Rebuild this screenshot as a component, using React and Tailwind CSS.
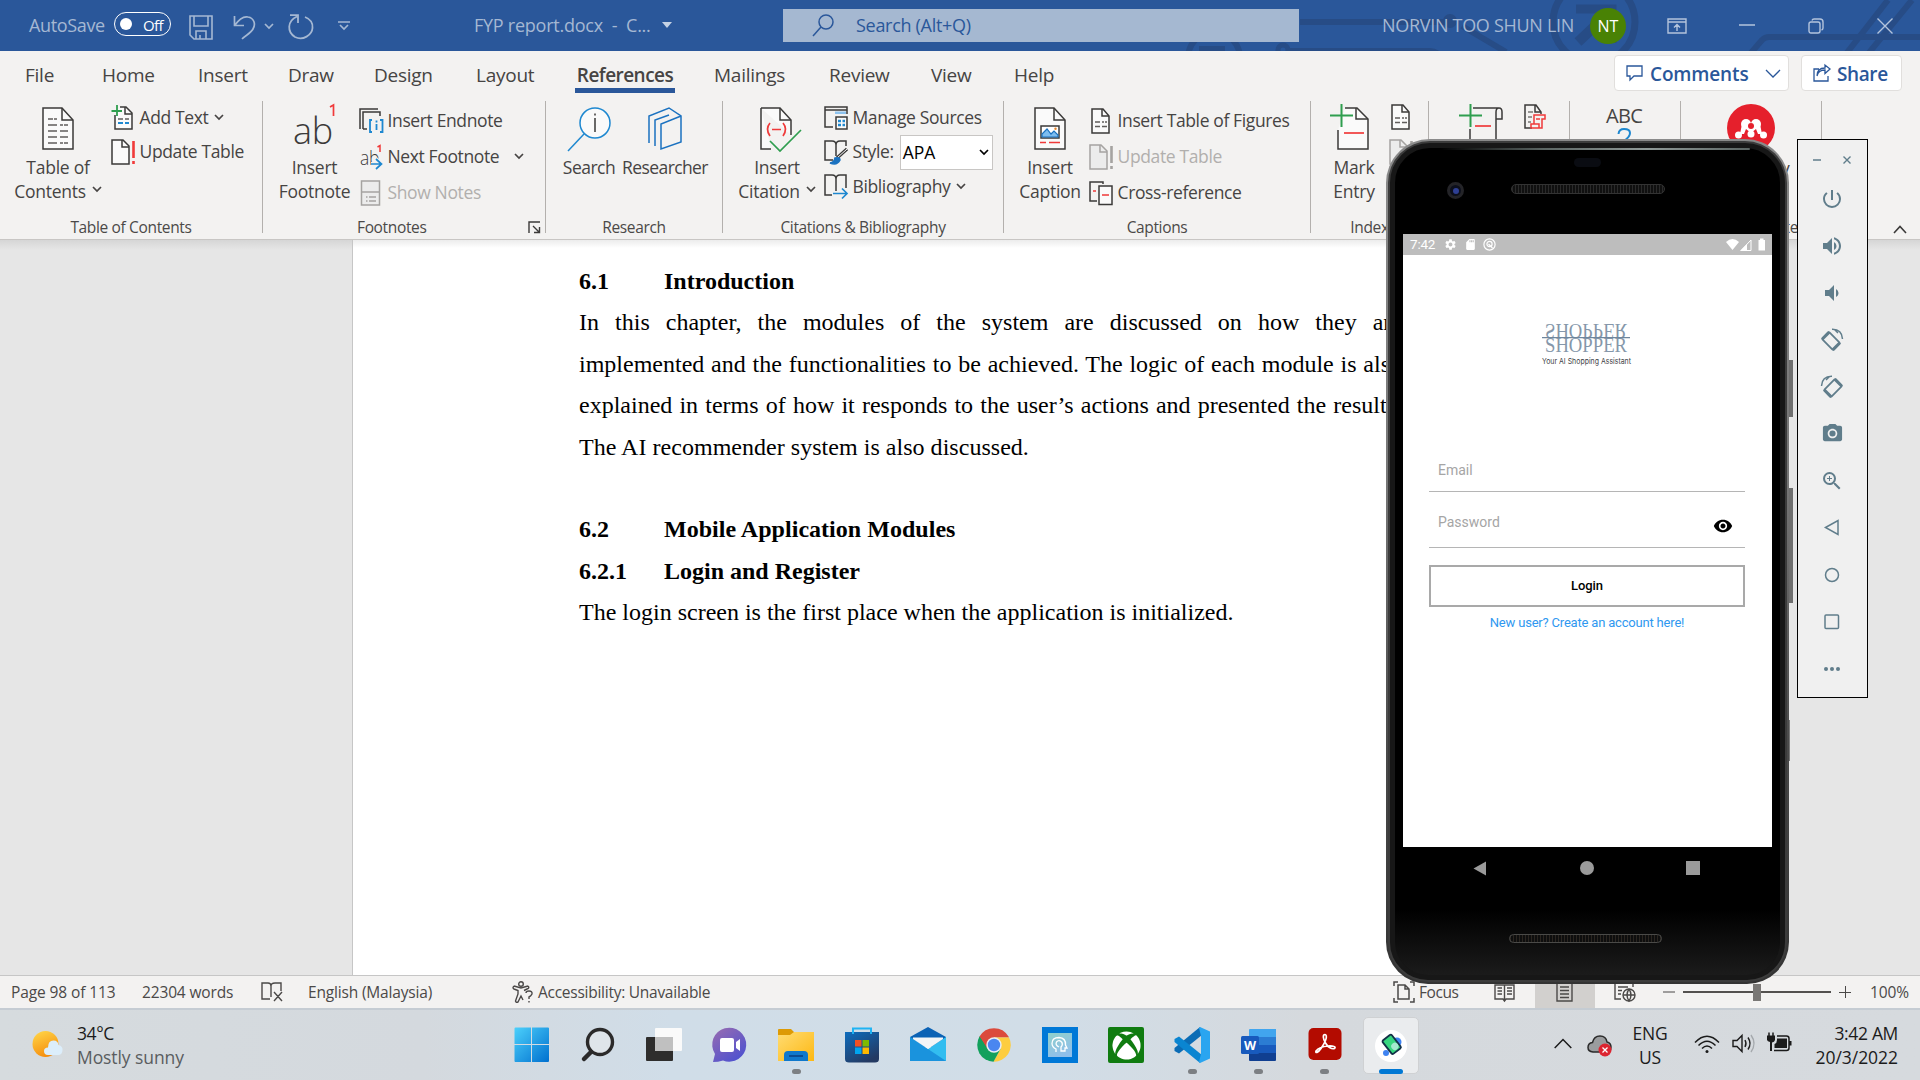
import React from "react";
import { MdPowerSettingsNew, MdVolumeUp, MdVolumeDown, MdPhotoCamera, MdZoomIn, MdSettings, MdRemoveRedEye, MdSdCard } from "react-icons/md";
import { FaXbox } from "react-icons/fa";

const INK = "#3b3a39";
const RED = "#f03a3a";
const BLUE = "#1e88d0";
const GREEN = "#2f9e4f";

function Svg({ w, h, className = "", children, ...rest }) {
  return (
    <svg width={w} height={h} viewBox={`0 0 ${w} ${h}`} fill="none" className={`shrink-0 overflow-visible ${className}`} {...rest}>
      {children}
    </svg>
  );
}

function Chevron({ w = 10, h = 6, className = "", sw = 1.7 }) {
  return (
    <Svg w={w} h={h} className={className} stroke="currentColor" strokeWidth={sw}>
      <path d={`M1 1 L${w / 2} ${h - 1} L${w - 1} 1`} />
    </Svg>
  );
}

/* ---------- Title bar ---------- */

function TitlePattern() {
  return (
    <svg className="absolute inset-y-0 right-0" width="740" height="51" viewBox="1180 0 740 51" fill="none" stroke="#274c86" strokeWidth="6">
      <path d="M1300 22 H1446" />
      <circle cx="1450" cy="21" r="7" fill="#274c86" stroke="none" />
      <path d="M1188 58 A26 26 0 0 1 1240 58" />
      <path d="M1199 46 h26 v8 h-26z" fill="#274c86" stroke="none" />
      <circle cx="1283" cy="50" r="5" strokeWidth="5" />
      <path d="M1290 51 H1430 q6 0 12 6" />
      <path d="M1462 26 L1506 52" />
      <circle cx="1594" cy="22" r="41" strokeWidth="7" />
      <path d="M1576 9 h36 v34" strokeWidth="9" />
      <path d="M1578 42 L1612 10" strokeWidth="10" />
      <path d="M1750 54 L1762 40 Q1765 37 1769 37 H1920" />
      <path d="M1846 54 L1888 0 M1868 54 L1912 0" />
    </svg>
  );
}

function TitleBar() {
  return (
    <header className="relative h-[51px] bg-[#2a579a] text-[#a5b8d3] overflow-hidden">
      <TitlePattern />
      <div className="relative flex h-full items-center text-[18px]">
        <span className="ml-[29px] w-[85px] tracking-[-0.35px]">AutoSave</span>
        <div className="-mt-[3px] flex h-6 w-[57px] items-center rounded-full border-[1.5px] border-white pl-[5px] text-white">
          <span className="h-3 w-3 rounded-full bg-white" />
          <span className="ml-[11px] mt-[2px] text-[15px] tracking-[-0.6px]">Off</span>
        </div>
        <Svg w={24} h={25} className="ml-[18px] mt-[3px]" stroke="currentColor" strokeWidth="1.6">
          <path d="M1 1 H23 V24 H5 L1 20 Z M5 1 V11 H19 V1 M7 24 V16 H17 V24 M11 24 V20" />
        </Svg>
        <Svg w={23} h={25} className="ml-5 mt-[3px]" stroke="currentColor" strokeWidth="1.7">
          <path d="M1.5 1 V10.5 H11 M1.5 10.5 C7 3 11 1 15 2 C21 3 23 9 20 14 C18 18 13 20 9 24" />
        </Svg>
        <Chevron w={10} h={6} className="ml-[8px]" />
        <Svg w={26} h={26} className="ml-[14px] mt-[3px]" stroke="currentColor" strokeWidth="1.8">
          <path d="M2 1.2 H10 V9 M9 2.5 C-1 7 -1 18 7 23 C15 27 24 21 24.500 14 C25 9 22 5 17 3" />
        </Svg>
        <Svg w={12} h={9} className="ml-6" stroke="currentColor" strokeWidth="1.7">
          <path d="M0 1 H12 M2 4 L6 8 L10 4" />
        </Svg>
        <span className="ml-[124px] w-[188px] whitespace-pre tracking-[-0.25px]">FYP report.docx  -  C...</span>
        <Svg w={10} h={6} fill="#c5d2e4" className="-mt-[2px]"><path d="M0 0 H10 L5 6 Z" fill="#c5d2e4" /></Svg>
        <div className="ml-[111px] flex h-[33px] w-[516px] items-center bg-[#a5b8d1] text-[#2a579a]">
          <Svg w={22} h={23} className="ml-[29px]" stroke="currentColor" strokeWidth="1.5">
            <circle cx="14" cy="8" r="7" /><path d="M9 13 L1 22" />
          </Svg>
          <span className="ml-[22px] tracking-[-0.3px]">Search (Alt+Q)</span>
        </div>
        <span className="ml-[83px] w-[208px] whitespace-nowrap tracking-[-0.3px]">NORVIN TOO SHUN LIN</span>
        <span className="flex h-9 w-9 items-center justify-center rounded-full bg-[#498205] text-[16px] text-white">NT</span>
        <Svg w={20} h={16} className="ml-[41px]" stroke="#b4c4dc" strokeWidth="1.4">
          <path d="M1 1 H19 V15 H1 Z M1 4 H19 M10 13 V7 M7 9.500 L10 6.500 L13 9.500" />
        </Svg>
        <Svg w={16} h={2} className="ml-[52px] -mt-[2px]" stroke="#b4c4dc" strokeWidth="1.5"><path d="M0 1 H16" /></Svg>
        <Svg w={16} h={16} className="ml-[53px]" stroke="#b4c4dc" strokeWidth="1.4">
          <rect x="1" y="4" width="11" height="11" rx="2" /><path d="M4 2.500 Q4.500 1 6 1 H12 Q15 1 15 4 V10 Q15 11.500 13.500 12" />
        </Svg>
        <Svg w={16} h={16} className="ml-[53px]" stroke="#b4c4dc" strokeWidth="1.4"><path d="M0.500 0.500 L15.500 15.500 M15.500 0.500 L0.500 15.500" /></Svg>
      </div>
    </header>
  );
}

/* ---------- Tabs ---------- */

const TABS = [
  ["File", "w-[77px]"], ["Home", "w-[96px]"], ["Insert", "w-[90px]"], ["Draw", "w-[86px]"], ["Design", "w-[102px]"],
  ["Layout", "w-[99px]"], ["References", "w-[139px]"], ["Mailings", "w-[115px]"], ["Review", "w-[102px]"], ["View", "w-[83px]"], ["Help", "w-[60px]"],
];

function Tabs() {
  return (
    <nav className="flex h-11 items-start pl-[25px] text-[19px] text-[#464443]">
      {TABS.map(([t, w]) => (
        <div key={t} className={`${w} flex h-[42px] shrink-0 items-end`}>
          {t === "References" ? (
            <span className="flex h-[37px] w-[100px] items-start justify-center whitespace-nowrap border-b-[5px] border-[#2a579a] font-semibold leading-[39px] tracking-[-0.55px]">{t}</span>
          ) : (
            <span className="h-[37px] leading-[39px] tracking-[-0.25px]">{t}</span>
          )}
        </div>
      ))}
      <div className="ml-[540px] mt-1 flex h-[36px] w-[175px] shrink-0 items-center rounded border border-[#e1dfdd] bg-white text-[#2a579a]">
        <Svg w={17} h={16} className="ml-[11px]" stroke="currentColor" strokeWidth="1.3"><path d="M1 1 H16 V11 H8 L4 15 V11 H1 Z" /></Svg>
        <span className="ml-[7px] mt-[3px] w-[115px] font-semibold tracking-[-0.15px]">Comments</span>
        <Chevron w={16} h={9} sw={1.3} />
      </div>
      <div className="ml-3 mt-1 flex h-[36px] w-[101px] shrink-0 items-center rounded border border-[#e1dfdd] bg-white text-[#2a579a]">
        <Svg w={18} h={18} className="ml-[11px]" stroke="currentColor" strokeWidth="1.3">
          <path d="M6 5 H1 V17 H15 V12 M4 12 C5 7 8 6 12 6 V9.500 L17 5 L12 1 V4 C7 4 4 7 4 12" />
        </Svg>
        <span className="ml-[6px] mt-[3px] font-semibold tracking-[-0.4px]">Share</span>
      </div>
    </nav>
  );
}

/* ---------- Ribbon icons ---------- */

const TocIcon = () => (
  <Svg w={32} h={43} stroke={INK} strokeWidth="1.5">
    <path d="M1 1 H20 L31 13 V42 H1 Z" fill="#fafafa" /><path d="M20 1 V13 H31" />
    <path d="M6 12 H11 M12 12 H15 M6 18 H15 M6 24 H15 M6 30 H15 M6 36 H15 M18 18 H21 M22 18 H26 M18 24 H26 M18 30 H26 M18 36 H21 M22 36 H26" stroke="#605e5c" strokeWidth="1.3" />
  </Svg>
);

const AddTextIcon = () => (
  <Svg w={25} h={26} stroke={INK} strokeWidth="1.5">
    <path d="M4 10 V24 H21 V8 L15 2 H9" fill="#fafafa" /><path d="M14 2 V9 H21" />
    <path d="M6 0 V11 M0.500 6 H11" stroke={GREEN} strokeWidth="1.8" />
    <path d="M7 14 H12 M14 14 H18 " stroke="#605e5c" /><path d="M7 18 H12 M14 18 H18" stroke={BLUE} strokeWidth="1.8" />
  </Svg>
);

const UpdateIcon = ({ off }) => (
  <Svg w={25} h={26} stroke={off ? "#a5a3a1" : INK} strokeWidth="1.5">
    <path d="M1 1 H12 L18 7 V25 H1 Z" fill={off ? "#ececec" : "#fafafa"} /><path d="M11 1 V8 H18" />
    <path d="M22.500 2 V19 M22.500 22 V25" stroke={off ? "#a5a3a1" : RED} strokeWidth="2.600" />
  </Svg>
);

const AbIcon = () => (
  <Svg w={43} h={42}>
    <text x="0" y="39.500" fontSize="37" fontFamily="Open Sans, sans-serif" fontWeight="300" fill={INK} textLength="40" lengthAdjust="spacingAndGlyphs">ab</text>
    <path d="M37 3 L40.500 1 V12" stroke={RED} strokeWidth="1.700" />
  </Svg>
);

const EndnoteIcon = () => (
  <Svg w={25} h={26} stroke={INK} strokeWidth="1.5">
    <path d="M1 21 V1 H19 M4 21 V4 H21 V8 M4 21 H8" />
    <path d="M13 12 H11 V24 H13 M21 12 H23.500 V24 H21 M17.500 12.500 V14.500 M17.500 16 V22" stroke={BLUE} strokeWidth="1.800" />
  </Svg>
);

const NextIcon = () => (
  <Svg w={25} h={26}>
    <text x="1" y="21" fontSize="20" fontFamily="Open Sans, sans-serif" fontWeight="300" fill={INK} textLength="19" lengthAdjust="spacingAndGlyphs">ab</text>
    <path d="M18.500 3 L21 1.500 V8" stroke={RED} strokeWidth="1.500" />
    <path d="M12 20 H22 M17 15 L22.500 20 L17 25" stroke="#f3f2f1" strokeWidth="4" />
    <path d="M12 20 H22 M17 15 L22.500 20 L17 25" stroke={BLUE} strokeWidth="1.700" />
  </Svg>
);

const NotesIcon = () => (
  <Svg w={25} h={26} stroke="#a5a3a1" strokeWidth="1.5">
    <path d="M2.500 1 H20.500 V25 H2.500 Z M2.500 12 H20.500" fill="#ececec" /><path d="M7 17 H8.500 M10 17 H17 M7 21 H8.500 M10 21 H17" />
  </Svg>
);

const SearchIcon = () => (
  <Svg w={44} h={45} stroke={BLUE} strokeWidth="1.500">
    <circle cx="28" cy="16" r="15" fill="#fafafa" /><path d="M17 27 L1 44" /><path d="M28 11 V25 M28 6.500 V8.500" stroke={INK} />
  </Svg>
);

const ResearcherIcon = () => (
  <Svg w={36} h={43} stroke="#1b72c0" strokeWidth="1.500">
    <path d="M2 36 V9 L22 1 L34 9 V35 L14 42 V17 L34 9 M8 39 V13 L22 8 M14 42" />
  </Svg>
);

const CitationIcon = () => (
  <Svg w={42} h={45} stroke={INK} strokeWidth="1.500">
    <path d="M1 1 H20 L31 13 V28 M11 42 H1 V1" fill="#fafafa" /><path d="M20 1 V13 H31" />
    <path d="M10 16 Q5 22 10 29 M23 16 Q28 22 23 29 M12 22.500 H21" stroke={RED} strokeWidth="1.700" />
    <path d="M10 34 L20 44 L41 23" stroke={GREEN} strokeWidth="1.700" />
  </Svg>
);

const ManageIcon = () => (
  <Svg w={25} h={24} stroke={INK} strokeWidth="1.500">
    <path d="M23 8 V1 H1 V21 H9 M1 4 H23" /><path d="M11 5.500 H22 V8 H11Z" fill="#8ec3ee" stroke="none" />
    <rect x="12" y="11" width="11" height="12" fill="#fafafa" />
    <path d="M14 15 H17 M18.500 15 H21 M14 19 H17 M18.500 19 H21" stroke={BLUE} strokeWidth="2.400" />
  </Svg>
);

const StyleIcon = () => (
  <Svg w={25} h={26} stroke={INK} strokeWidth="1.500">
    <path d="M9 21 H1 V2 H8 Q12 2 12 6 V17 M12 6 Q12 2 16 2 H22 V7" fill="none" />
    <path d="M23 10 L13 19" strokeWidth="3.200" /><path d="M23 10 L13 19" stroke="#fafafa" strokeWidth="1" />
    <path d="M6 24 Q10 24 11 19 Q16 18 16 21 Q13 27 6 24 Z" fill="#1b72c0" stroke="#1b72c0" />
  </Svg>
);

const BiblioIcon = () => (
  <Svg w={25} h={26} stroke={INK} strokeWidth="1.500">
    <path d="M8 21 H1 V1 H8 Q12 1 12 5 V17 M12 5 Q12 1 16 1 H22 V14" />
    <path d="M9 19.500 H23 M18 14.500 L23 19.500 L18 24.500" stroke={BLUE} strokeWidth="1.700" />
  </Svg>
);

const CaptionIcon = () => (
  <Svg w={32} h={43} stroke={INK} strokeWidth="1.500">
    <path d="M1 1 H20 L31 13 V42 H1 Z" fill="#fafafa" /><path d="M20 1 V13 H31" />
    <rect x="7" y="19" width="18" height="12" fill="#fff" />
    <path d="M8 30 V27 L13 22 L17 27 L20 24 L24 28 V30 Z" fill="#7dbdf0" stroke="#1b72c0" strokeWidth="1.200" />
    <circle cx="21.500" cy="21.800" r="1.200" fill="#e8842a" stroke="none" />
    <path d="M6 35.500 H12 M15 35.500 H26" stroke={RED} strokeWidth="1.700" />
  </Svg>
);

const LinesDoc = ({ w = 24 }) => (
  <Svg w={w} h={26} stroke={INK} strokeWidth="1.500">
    <path d="M3 1 H14 L20 8 V25 H3 Z" fill="#fafafa" /><path d="M13 1 V8 H20" />
    <path d="M6 14 H11 M13 14 H15 M16 14 H18 M6 18.500 H11 M13 18.500 H18" stroke="#605e5c" />
  </Svg>
);

const CrossIcon = () => (
  <Svg w={25} h={25} stroke={INK} strokeWidth="1.500">
    <path d="M14 3 V1 H1 V20 H8" /><rect x="10" y="5" width="13" height="18.500" fill="#fafafa" />
    <path d="M4 10 H7 M13 14 H20" stroke={RED} strokeWidth="1.700" />
  </Svg>
);

const MarkIcon = () => (
  <Svg w={40} h={46} stroke={INK} strokeWidth="1.500">
    <path d="M15 4 H27 L38 15 V45 H8 V26" fill="#fafafa" /><path d="M26 4 V15 H38" />
    <path d="M11.500 0 V23 M0 11.500 H23" stroke={GREEN} strokeWidth="2" /><path d="M14 29 H34" stroke={RED} strokeWidth="1.700" />
  </Svg>
);

const ScrollIcon = () => (
  <Svg w={46} h={46} stroke={INK} strokeWidth="1.500">
    <path d="M14 4 H40 Q43 4 43 8 V15 H37 V8 Q37 4 40 4 M37 15 V45 H11 V25" />
    <path d="M11.500 0 V23 M0 11.500 H23" stroke={GREEN} strokeWidth="2" /><path d="M16 22 H32" stroke={RED} strokeWidth="1.700" />
  </Svg>
);

const AuthoritiesIcon = () => (
  <Svg w={24} h={26} stroke={INK} strokeWidth="1.500">
    <path d="M8 24 H1 V1 H12 L17 8 V10 M11 1 V8 H17" /><path d="M4 8 H9 M4 13 H8 M4 18 H7" strokeWidth="1.200" />
    <path d="M10 11 H21 V15 H18 V24 H7 V20 H10 Z M10 20 H15 V24 M12 15 H16" stroke={RED} />
  </Svg>
);

/* ---------- Ribbon ---------- */

function Group({ w, label, children, launcher, labelClass = "justify-center" }) {
  return (
    <section className={`${w} flex h-[132px] shrink-0 flex-col border-r border-[#b3b0ad]`}>
      <div className="flex h-[115px] shrink-0 items-start">{children}</div>
      <div className={`relative flex h-[22px] shrink-0 items-center whitespace-nowrap text-[15.500px] leading-[22px] tracking-[-0.350px] text-[#4b4948] ${labelClass}`}>
        {label}
        {launcher && (
          <Svg w={13} h={13} className="absolute right-[4px] top-[5px]" stroke={INK} strokeWidth="1.400">
            <path d="M1 12 V1 H12 M5 5 L11 11 M11.500 6 V11.500 H6" />
          </Svg>
        )}
      </div>
    </section>
  );
}

function Big({ w, icon, l1, l2, drop }) {
  return (
    <div className={`${w} flex shrink-0 flex-col items-center text-[17.500px] leading-6 tracking-[-0.250px]`}>
      <div className="flex h-[54px] w-full items-end justify-center"><div className="flex h-[48px] items-start justify-center">{icon}</div></div>
      <span className="whitespace-nowrap">{l1}</span>
      {l2 && <span className="flex items-center gap-[6px] whitespace-nowrap">{l2}{drop && <Chevron className="-mt-1" />}</span>}
    </div>
  );
}

function Row({ icon, text, h = "h-9", off, drop = "" }) {
  return (
    <div className={`${h} flex items-center whitespace-nowrap text-[17.500px] tracking-[-0.370px] ${off ? "text-[#b1afad]" : ""}`}>
      <span className="flex w-[28.500px] items-center">{icon}</span>
      <span className="-mt-px">{text}</span>
      {drop && <Chevron className={`-mt-[2px] ${drop}`} />}
    </div>
  );
}

function Ribbon() {
  return (
    <div className="flex h-[145px] items-start border-b border-[#c8c6c4] pt-[6px] text-[#464443]">
      <Group w="w-[263px]" label="Table of Contents">
        <Big w="w-[112px] pl-1" icon={<TocIcon />} l1="Table of" l2="Contents" drop />
        <div className="-ml-[1px] flex flex-col">
          <Row h="h-[34px]" icon={<AddTextIcon />} text="Add Text" drop="ml-[6px]" />
          <Row h="h-[34px]" icon={<UpdateIcon />} text="Update Table" />
        </div>
      </Group>
      <Group w="w-[283px]" label="Footnotes" launcher labelClass="pl-[94px]">
        <Big w="w-[96px] pl-[7px]" icon={<div className="-mt-[3px]"><AbIcon /></div>} l1="Insert" l2="Footnote" />
        <div className="flex flex-col pt-[2px]">
          <Row icon={<EndnoteIcon />} text="Insert Endnote" />
          <Row icon={<NextIcon />} text="Next Footnote" drop="ml-[15px]" />
          <Row icon={<NotesIcon />} text="Show Notes" off />
        </div>
      </Group>
      <Group w="w-[177px]" label="Research">
        <Big w="w-[73px] pl-[13px]" icon={<SearchIcon />} l1={<span className="tracking-[-0.500px]">Search</span>} />
        <Big w="w-[92px]" icon={<ResearcherIcon />} l1={<span className="tracking-[-0.600px]">Researcher</span>} />
      </Group>
      <Group w="w-[281px]" label="Citations & Bibliography">
        <Big w="w-[101px] pl-[7px]" icon={<div className="ml-[8px]"><CitationIcon /></div>} l1="Insert" l2="Citation" drop />
        <div className="flex flex-col">
          <Row h="h-[34px]" icon={<ManageIcon />} text="Manage Sources" />
          <div className="flex h-[34px] items-center">
            <Row h="h-[34px]" icon={<StyleIcon />} text="Style:" />
            <div className="ml-[6px] flex h-[35px] w-[93px] items-center justify-between border border-[#c8c6c4] bg-white pl-[2px] pr-[3px] text-[17.500px] text-black">
              APA <Chevron />
            </div>
          </div>
          <Row h="h-[36px]" icon={<BiblioIcon />} text="Bibliography" drop="ml-[6px]" />
        </div>
      </Group>
      <Group w="w-[307px]" label="Captions">
        <Big w="w-[85px] pl-[7px]" icon={<CaptionIcon />} l1="Insert" l2="Caption" />
        <div className="flex flex-col pt-[2px]">
          <Row icon={<LinesDoc />} text="Insert Table of Figures" />
          <Row icon={<UpdateIcon off />} text="Update Table" off />
          <Row icon={<CrossIcon />} text="Cross-reference" />
        </div>
      </Group>
      <Group w="w-[118px]" label="Index">
        <Big w="w-[78px] pl-[8px]" icon={<div className="-mt-[3px] -ml-[8px]"><MarkIcon /></div>} l1="Mark" l2="Entry" />
        <div className="flex flex-col gap-[9px] pt-[3px]">
          <LinesDoc />
          <UpdateIcon off />
        </div>
      </Group>
      <Group w="w-[141px]" label="">
        <div className="flex gap-[19px] pl-[30px] pt-[3px]"><ScrollIcon /><AuthoritiesIcon /></div>
      </Group>
      <Group w="w-[111px]" label="">
        <div className="flex flex-col items-center pl-[36px] pt-[3px]">
          <span className="text-[20px] leading-6 tracking-[-0.600px]">ABC</span>
          <Svg w={14} h={24} stroke={BLUE} strokeWidth="2"><path d="M1.500 6 Q2 1 7 1 Q13 1 13 5 Q13 9 7 13 V18" /></Svg>
        </div>
      </Group>
      <Group w="w-[141px]" label="Mendeley Cite" labelClass="justify-end pr-[23px]">
        <div className="flex w-full flex-col items-center pt-[3px]">
          <Svg w={48} h={48}>
            <circle cx="24" cy="24" r="24" fill="#e5202c" />
            <g fill="#fff"><circle cx="19" cy="20" r="5" /><circle cx="29" cy="20" r="5" /><path d="M15 20 L13 30 H17 L19 25 L24 29 L29 25 L31 30 H35 L33 20 Z" /><circle cx="11.500" cy="31" r="3.500" /><circle cx="24" cy="30" r="3.500" /><circle cx="36.500" cy="31" r="3.500" /></g>
            <circle cx="24" cy="22" r="3" fill="#e5202c" />
          </Svg>
          <span className="mt-1 text-[17.500px] leading-6 tracking-[-0.400px]">Mendeley</span>
        </div>
      </Group>
      <Svg w={14} h={9} className="ml-[71px] mt-[124px]" stroke={INK} strokeWidth="1.600"><path d="M1 8 L7 1.500 L13 8" /></Svg>
    </div>
  );
}

/* ---------- Document ---------- */

function Document() {
  return (
    <main className="flex h-[735px] bg-[linear-gradient(to_bottom,#d6d6d6,#e6e6e6_10px)]">
      <article className="ml-[352px] w-[1192px] border-l border-[#c6c6c6] bg-[linear-gradient(to_bottom,#ececec,#ffffff_8px)] pl-[226px] pt-[21px] font-['Liberation_Serif',serif] text-[24px] leading-[41.400px] text-black">
        <h2 className="flex font-bold"><span className="w-[85px]">6.1</span>Introduction</h2>
        <p className="w-[823px] text-justify [text-align-last:justify]">In this chapter, the modules of the system are discussed on how they are</p>
        <p className="w-[823px] text-justify [text-align-last:justify]">implemented and the functionalities to be achieved. The logic of each module is also</p>
        <p className="w-[823px] text-justify [text-align-last:justify]">explained in terms of how it responds to the user’s actions and presented the results.</p>
        <p className="tracking-[0.03px]">The AI recommender system is also discussed.</p>
        <h2 className="mt-[41.400px] flex font-bold tracking-[0.03px]"><span className="w-[85px]">6.2</span>Mobile Application Modules</h2>
        <h3 className="flex font-bold"><span className="w-[85px]">6.2.1</span>Login and Register</h3>
        <p>The login screen is the first place when the application is initialized.</p>
      </article>
    </main>
  );
}

/* ---------- Status bar ---------- */

function StatusBar() {
  const c = "#4b4948";
  return (
    <footer className="flex h-[33px] items-center border-t border-[#c6c6c6] bg-[#f3f2f1] text-[15.500px] text-[#4b4948]">
      <span className="ml-[11px] mt-[2px] w-[131px] tracking-[-0.100px]">Page 98 of 113</span>
      <span className="mt-[2px] w-[119px] tracking-[-0.150px]">22304 words</span>
      <Svg w={22} h={20} stroke={c} strokeWidth="1.400"><path d="M9 17 H1 V1 H7 Q10 1 10 4 V15 M10 4 Q10 1 14 1 H20 V9 M13 10 L21 19 M21 10 L13 19" /></Svg>
      <span className="ml-[25px] mt-[2px] w-[204px] tracking-[-0.170px]">English (Malaysia)</span>
      <Svg w={22} h={22} stroke={c} strokeWidth="1.400">
        <circle cx="9" cy="3" r="2.300" /><path d="M2 5 Q0 7 2 8 L6 9.500 V13 L3.500 20 Q4 22 6 21 L9 15 L11 19 M16 5 Q18 7 15 8 L12 9.500 M2 5 L9 7 L16 5" />
        <path d="M14 12 Q14 10 17 10 Q20.500 10 20 13 Q19 15 17 16 V18 M17 20 V21.500" />
      </Svg>
      <span className="ml-[4px] mt-[2px] w-[855px] tracking-[-0.260px]">Accessibility: Unavailable</span>
      <Svg w={22} h={22} stroke={c} strokeWidth="1.500"><path d="M5 1 H1 V5 M17 1 H21 V5 M1 17 V21 H5 M21 17 V21 H17 M5 4 H12 L16 8 V18 H5 Z M12 4 V8 H16" /></Svg>
      <span className="ml-[4px] mt-[2px] w-[75px] tracking-[-0.450px]">Focus</span>
      <Svg w={22} h={20} stroke={c} strokeWidth="1.400"><path d="M10.500 3 V19 M10.500 3 H1 V17 H9 L10.500 19 L12 17 H20 V3 Z M3.500 6 H8 M3.500 9 H8 M3.500 12 H8 M13 6 H18 M13 9 H18 M13 12 H18" /></Svg>
      <div className="ml-[19px] flex h-full w-[60px] items-center justify-center bg-[#d2d0ce] pr-[2px]">
        <Svg w={17} h={20} stroke={c} strokeWidth="1.400"><path d="M1 1 H16 V19 H1 Z M4 5 H13 M4 8.500 H13 M4 12 H13 M4 15.500 H13" /></Svg>
      </div>
      <Svg w={22} h={20} className="ml-[19px]" stroke={c} strokeWidth="1.400"><path d="M7 17 H1 V1 H19 V5 M4 5 H14 M4 8.500 H8 M4 12 H7" /><circle cx="15" cy="13" r="6" /><path d="M9 13 H21 M15 7 Q11 13 15 19 Q19 13 15 7" /></Svg>
      <Svg w={12} h={2} className="ml-[27px]" stroke={c}><path d="M0 1 H12" /></Svg>
      <div className="ml-[8px] flex w-[148px] items-center">
        <span className="h-[2px] w-[70px] bg-[#53514f]" /><span className="h-[17px] w-2 bg-[#797775]" /><span className="h-[2px] w-[70px] bg-[#53514f]" />
      </div>
      <Svg w={12} h={12} className="ml-[8px]" stroke={c}><path d="M0 6.500 H12 M6.500 0 V12" /></Svg>
      <span className="ml-[19px] mt-[2px] tracking-[-0.150px]">100%</span>
    </footer>
  );
}

/* ---------- Taskbar ---------- */

const WinLogo = () => (
  <Svg w={36} h={36}>
    <defs><linearGradient id="win" x1="0" y1="0" x2="1" y2="1"><stop stopColor="#4cd0fb" /><stop offset="1" stopColor="#0070cf" /></linearGradient></defs>
    <path d="M0.500 1.500 Q0.500 0.500 1.500 0.500 H17 V17 H0.500Z M18 0.500 H34 Q35 0.500 35 1.500 V17 H18Z M0.500 18 H17 V35 H1.500 Q0.500 35 0.500 34Z M18 18 H35 V34 Q35 35 34 35 H18Z" fill="url(#win)" />
  </Svg>
);
const FindIcon = () => (
  <Svg w={36} h={36} stroke="#2b2a2a" strokeLinecap="round"><circle cx="20" cy="15" r="12.500" strokeWidth="3.400" fill="#dfe5ea" /><path d="M11 25 L4 32" strokeWidth="4.500" /></Svg>
);
const TaskView = () => (
  <Svg w={36} h={36}><rect x="0" y="10" width="27" height="24" rx="1" fill="#2e2d2c" /><rect x="9" y="1" width="27" height="23" rx="1" fill="#fafafa" /><path d="M9 10 H27 V24 H9Z" fill="#c0c0c0" /></Svg>
);
const ChatIcon = () => (
  <Svg w={36} h={36}>
    <defs><linearGradient id="chat" x1="0" y1="0" x2="0.700" y2="1"><stop stopColor="#9a6cb0" /><stop offset="1" stopColor="#4f52cf" /></linearGradient></defs>
    <path d="M1 35 L3 27 A17 17 0 1 1 11 33.500 Q6 35 1 35Z" fill="url(#chat)" />
    <rect x="8" y="11" width="14" height="14" rx="2" fill="#fff" /><path d="M24 15 L28 12 V24 L24 21Z" fill="#fff" />
  </Svg>
);
const FolderIcon = () => (
  <Svg w={36} h={36}>
    <defs><linearGradient id="fold" x1="0" y1="0" x2="1" y2="1"><stop stopColor="#ffdc73" /><stop offset="1" stopColor="#fdb813" /></linearGradient></defs>
    <path d="M0 3 Q0 2 1 2 H13 L16 5 H36 V12 H0Z" fill="#dd9a05" /><path d="M0 8 H12 L16 5 H36 V34 H0Z" fill="url(#fold)" />
    <path d="M6 34 V28 Q6 24 10 24 H26 Q30 24 30 28 V34Z" fill="#0f78cc" /><path d="M11 29 H25" stroke="#0a4c93" strokeWidth="2" />
  </Svg>
);
const StoreIcon = () => (
  <Svg w={36} h={36}>
    <defs><linearGradient id="store" x1="0" y1="0" x2="0.600" y2="1"><stop stopColor="#0d6cbd" /><stop offset="1" stopColor="#243a63" /></linearGradient></defs>
    <path d="M1 5 H35 V32 Q35 35.500 31 35.500 H5 Q1 35.500 1 32Z" fill="url(#store)" /><path d="M9 7 V1.500 H27 V7" stroke="#1fb3f3" strokeWidth="2" />
    <path d="M11 13 H17.500 V19.500 H11Z" fill="#f25022" /><path d="M18.500 13 H25 V19.500 H18.500Z" fill="#7fba00" /><path d="M11 20.500 H17.500 V27 H11Z" fill="#00a4ef" /><path d="M18.500 20.500 H25 V27 H18.500Z" fill="#ffb900" />
  </Svg>
);
const MailIcon = () => (
  <Svg w={36} h={36}><path d="M0 10 L18 0 L36 10 V20 H0Z" fill="#0b62b5" /><path d="M0 10 V34 H36 V10 L18 22Z" fill="#32bdf0" /><path d="M0 10 L36 34 H0Z" fill="#1a93dd" /><path d="M3 10.500 H33 V12 L18 22 L3 12Z" fill="#f3f5f7" /></Svg>
);
const ChromeIcon = () => (
  <Svg w={36} h={36}>
    <path d="M18 18 L3.500 9.600 A16.700 16.700 0 0 1 32.500 9.600 L33 10.500 H18Z" fill="#db4a3c" />
    <path d="M18 18 L18 10.500 H33 A16.700 16.700 0 0 1 17.500 34.700 L24.500 22Z" fill="#fdcd40" />
    <path d="M3.500 9.600 A16.700 16.700 0 0 0 17.500 34.700 L24.500 22 L18 18Z" fill="#12a05c" />
    <path d="M3.500 9.600 L11.500 22 L18 10.500 V8Z" fill="#db4a3c" />
    <path d="M3.500 9.600 L11.500 22 L18 26 L8 30 L2 20Z" fill="#12a05c" />
    <circle cx="18" cy="18" r="7.700" fill="#e9edf5" /><circle cx="18" cy="18" r="6.200" fill="#4a86f0" />
  </Svg>
);
const HeadIcon = () => (
  <Svg w={36} h={36}>
    <defs><linearGradient id="head" x1="0" y1="0" x2="0.400" y2="1"><stop stopColor="#8fd0cb" /><stop offset="1" stopColor="#8fbfea" /></linearGradient></defs>
    <rect width="36" height="36" fill="#0078d7" /><rect x="6" y="6" width="24" height="24" fill="url(#head)" />
    <path d="M14 25 V22 Q10 20 10 16.500 Q10 10.500 17 10.500 Q24 11 23.500 18 L25 21 H23 V24 H19 V20 Q21 18 20 15.500 Q17 12 14.500 15 Q13 18 17 20" stroke="#fff" strokeWidth="1.300" />
  </Svg>
);
const XboxIcon = () => (
  <span className="flex h-9 w-9 items-center justify-center rounded-[2px] bg-[#107c10]"><FaXbox className="h-[29px] w-[29px] text-white" /></span>
);
const CodeIcon = () => (
  <Svg w={36} h={36}>
    <path d="M26 0 L28 8 L5 26.500 L0.500 24 V21Z" fill="#0b6cb5" /><path d="M26 36 L28 28 L5 9.500 L0.500 12 V15Z" fill="#0a85d1" />
    <path d="M26 0 L36 4.500 V31.500 L26 36 L25 35 L27 27 V9 L25 1Z" fill="#2aa5f0" />
  </Svg>
);
const WordIcon = () => (
  <Svg w={36} h={36}>
    <path d="M8 3 Q8 2 9 2 H35 V10 H8Z" fill="#41a5ee" /><path d="M8 10 H35 V18 H8Z" fill="#2b7cd3" /><path d="M8 18 H35 V26 H8Z" fill="#185abd" /><path d="M8 26 H35 V33 Q35 34 34 34 H9 Q8 34 8 33Z" fill="#103f91" />
    <rect x="0" y="9" width="18" height="18" rx="1.500" fill="#185abd" />
    <text x="9" y="22.500" textAnchor="middle" fontFamily="Open Sans, sans-serif" fontWeight="700" fontSize="12.500" fill="#fff">W</text>
  </Svg>
);
const AcrobatIcon = () => (
  <Svg w={36} h={36}>
    <rect x="1.500" y="1" width="33" height="32" rx="5" fill="#b30b00" />
    <path d="M18 7.500 C15.500 7.500 16 12 18.500 16 C21 20.500 25 22.500 27.500 21.500 C29.500 20 26 18.500 21 19 C16 19.500 11 21.500 9 24 C8 26.500 11 26 14 21.500 C17 17 20 12 19.300 9 C19 8 18.700 7.500 18 7.500Z" stroke="#fff" strokeWidth="1.700" />
  </Svg>
);
const EmulatorIcon = () => (
  <Svg w={36} h={36}>
    <circle cx="18" cy="18" r="16" fill="#fff" /><circle cx="24" cy="14" r="4.500" fill="#3f83f1" /><circle cx="13" cy="25" r="3" fill="#3f83f1" />
    <g transform="rotate(-38 18.500 16.500)"><rect x="13" y="8" width="11.500" height="17" rx="1.500" fill="#37d67f" stroke="#123047" strokeWidth="1.800" /><circle cx="20" cy="20" r="3.600" fill="#a4e9cf" /></g>
  </Svg>
);

const APPS = [
  [WinLogo], [FindIcon], [TaskView], [ChatIcon], [FolderIcon, "dot"], [StoreIcon], [MailIcon], [ChromeIcon], [HeadIcon], [XboxIcon], [CodeIcon, "dot"], [WordIcon, "dot"], [AcrobatIcon, "dot"], [EmulatorIcon, "active"],
];

function Taskbar() {
  return (
    <div className="flex h-[72px] items-start border-t-2 border-[#c5ccd3] bg-[linear-gradient(to_right,#d6dbde_0%,#d4d9de_22%,#d0dde8_35%,#d1dde7_55%,#d5d9dd_68%,#d6dade_100%)] text-[#1b1b1b]">
      <div className="flex w-[499px] pl-[31px] pt-[11px]">
        <Svg w={34} h={36} className="mt-[9px]">
          <defs><linearGradient id="sun" x1="0.200" y1="0" x2="0.600" y2="1"><stop stopColor="#ffd447" /><stop offset="1" stopColor="#f58b0b" /></linearGradient></defs>
          <circle cx="14.500" cy="14" r="13" fill="url(#sun)" />
          <path d="M17 25 Q13 25 13 21 Q13 17.500 17 17.500 Q17 10.500 22.500 10.500 Q27 10.500 27.500 15 Q32 16 31.500 20.500 Q31 25 27 25Z" fill="#dceefb" />
        </Svg>
        <div className="ml-3 flex flex-col whitespace-nowrap text-[17.500px] leading-6 tracking-[-0.400px]">
          <span>34°C</span><span className="tracking-[-0.080px] text-[#5a5d60]">Mostly sunny</span>
        </div>
      </div>
      <div className="flex">
        {APPS.map(([I, s], i) => (
          <div key={i} className="flex w-[66.050px] shrink-0 flex-col items-center pt-[7px]">
            <div className={`flex h-[57px] w-[56px] flex-col items-center pt-[10px] ${s === "active" ? "rounded-[5px] border border-[#cfd1d3] bg-[#eaecee] pt-[9px]" : ""}`}>
              <I />
              {s === "dot" && <span className="mt-[6px] h-[5px] w-[9px] rounded-full bg-[#7c7f83]" />}
              {s === "active" && <span className="mt-[5px] h-[5px] w-6 shrink-0 rounded-full bg-[#0078d4]" />}
            </div>
          </div>
        ))}
      </div>
      <div className="flex flex-1 items-start justify-end pr-[22px] pt-[11px]">
        <Svg w={18} h={11} className="mt-[17px]" stroke="#1b1b1b" strokeWidth="1.500"><path d="M0.700 10 L9 1.500 L17.300 10" /></Svg>
        <Svg w={26} h={24} className="ml-[15px] mt-[13px]">
          <path d="M6 18 Q1 17.500 1 13.500 Q1 9 5.500 8.500 Q7 2 13 2 Q19 2 20 8 Q24 9 24 13 Q24 18 19 18Z" fill="#9a9c9e" stroke="#2a2a2a" strokeWidth="1.500" />
          <circle cx="18" cy="16" r="6.500" fill="#dc2430" /><path d="M15.500 13.500 L20.500 18.500 M20.500 13.500 L15.500 18.500" stroke="#fff" strokeWidth="1.300" />
        </Svg>
        <div className="ml-[19px] flex w-9 flex-col items-center text-[17.500px] leading-6 tracking-[-0.200px]"><span>ENG</span><span>US</span></div>
        <Svg w={26} h={20} className="ml-[26px] mt-[14px]" stroke="#1b1b1b" strokeWidth="1.500">
          <path d="M1 7.500 Q13 -5 25 7.500 M4.500 10.500 Q13 2 21.500 10.500 M8 13.500 Q13 8.500 18 13.500" /><circle cx="13" cy="16.500" r="1.500" fill="#1b1b1b" stroke="none" />
        </Svg>
        <Svg w={24} h={22} className="ml-[12px] mt-[12px]" stroke="#1b1b1b" strokeWidth="1.400">
          <path d="M1 7.500 H5 L10 2.500 V18.500 L5 13.500 H1Z M13 7 Q15 10.500 13 14 M16 4.500 Q20 10.500 16 16.500" /><path d="M19 2 Q25 10.500 19 19" stroke="#a5a9ad" />
        </Svg>
        <Svg w={25} h={22} className="ml-[11px] mt-[11px]">
          <path d="M2 0.500 V4 M6 0.500 V4" stroke="#1b1b1b" strokeWidth="1.500" /><path d="M0 3.500 H8 V8 Q7.500 10 5 10.500 V19 H3 V10 Q0.500 9.500 0 8Z" fill="#1b1b1b" />
          <path d="M10 4 H19.500 Q22 4 22 6.500 V16 Q22 18.500 19.500 18.500 H7" stroke="#1b1b1b" strokeWidth="1.500" /><path d="M22 9 H24.500 V13.500 H22Z" fill="#1b1b1b" /><path d="M10 6.500 H20 V16 H7.500 V12 Q10 11 10 8Z" fill="#1b1b1b" />
        </Svg>
        <div className="ml-[22px] flex w-[84px] flex-col items-end whitespace-nowrap text-[17.500px] leading-6"><span className="tracking-[-0.350px]">3:42 AM</span><span className="tracking-[-0.050px]">20/3/2022</span></div>
      </div>
    </div>
  );
}

/* ---------- Emulator ---------- */

function RotateIcon({ flip }) {
  return (
    <Svg w={24} h={24} stroke="currentColor" className={flip ? "-scale-x-100" : ""}>
      <g transform="rotate(-45 11 13)"><rect x="6" y="5" width="10" height="16" rx="1.200" strokeWidth="1.800" /><path d="M6 5.500 H16 M6 20.500 H16" strokeWidth="3" /></g>
      <path d="M12 1.200 Q22 1 22.500 11 M14.500 1.500 L18 5" strokeWidth="1.500" />
    </Svg>
  );
}

function ShopperLogo() {
  return (
    <svg width="96" height="46" viewBox="0 0 96 46" className="overflow-visible">
      <defs>
        <linearGradient id="fade" x1="0" y1="0" x2="0" y2="1"><stop offset="0.300" stopColor="#a3b2c1" /><stop offset="1" stopColor="#6a8199" /></linearGradient>
      </defs>
      <g fontFamily="Liberation Serif, serif" fontSize="21" fill="#8597aa">
        <text x="6" y="30" textLength="82" lengthAdjust="spacingAndGlyphs">SHOPPER</text>
        <text x="6" y="0" textLength="82" lengthAdjust="spacingAndGlyphs" transform="translate(0 1.500) scale(1 -1)" aria-hidden="true">SHOPPER</text>
      </g>
      <path d="M3 15.700 H91" stroke="#6f869d" strokeWidth="1.200" />
      <text x="3" y="42" fontFamily="Inter, sans-serif" fontSize="8" fontWeight="400" fill="#3f4347" textLength="89" lengthAdjust="spacingAndGlyphs">Your AI Shopping Assistant</text>
    </svg>
  );
}

function Phone() {
  return (
    <div className="absolute left-[1386px] top-[139px] h-[845px] w-[403px]">
      <div className="absolute right-[-4px] top-[221px] h-[57px] w-[5px] bg-[#6e6e6e]" />
      <div className="absolute right-[-4px] top-[349px] h-[115px] w-[5px] bg-[#6e6e6e]" />
      <div className="absolute right-[-1px] top-[581px] h-[41px] w-1 bg-[#777]" />
      <div className="relative flex h-full w-full flex-col rounded-[44px_44px_42px_42px] bg-[linear-gradient(to_bottom,#8a8a8a_0%,#777_40%,#4a4a4a_72%,#333_100%)] p-[2px]">
        <div className="flex flex-1 flex-col rounded-[42px_42px_40px_40px] bg-[#3c3c3c] p-[2px]">
          <div className="flex flex-1 flex-col items-center rounded-[40px_40px_38px_38px] border-[5px] border-[#171717] bg-[linear-gradient(to_bottom,#000_92%,#1b1b1b_100%)]">
            <div className="relative flex h-[86px] w-full flex-col items-center">
              <div className="absolute left-[45px] top-0 h-[2px] w-[310px] rounded-full bg-[linear-gradient(to_right,transparent,#5c6664,#909a98,#5c6664)]" />
              <div className="mt-[10px] h-[9px] w-[27px] rounded-full bg-[#0a0c12]" />
              <div className="mt-[17px] h-[10px] w-[154px] rounded-full border border-[#333] bg-[repeating-linear-gradient(to_right,#2a2a2a_0_1px,#101010_1px_3px)]" />
              <div className="absolute left-[52px] top-[34px] flex h-[17px] w-[17px] items-center justify-center rounded-full border-[3px] border-[#242428] bg-[#0c0f1c]"><span className="h-[6px] w-[6px] rounded-full bg-[#2e3f94]" /></div>
            </div>
            <div className="flex h-[613px] w-[369px] shrink-0 flex-col items-center bg-white pr-[1px] font-['Roboto',sans-serif]">
              <div className="-mr-[1px] flex h-[21px] w-[369px] items-center bg-[#bdbdbd] text-white">
                <span className="ml-[7px] w-[34px] text-[13.500px] tracking-[-0.200px]">7:42</span>
                <MdSettings size={13} />
                <MdSdCard size={13} className="ml-[7px]" />
                <Svg w={13} h={13} className="ml-[6px]" stroke="#fff" strokeWidth="1.200"><circle cx="6.500" cy="6.500" r="5.600" /><circle cx="6.500" cy="6" r="2.600" /><path d="M5.500 6 L9.500 10" /></Svg>
                <Svg w={13} h={11} className="ml-auto"><path d="M0 3 Q6.500 -3 13 3 L6.500 11Z" fill="#fff" /></Svg>
                <Svg w={12} h={12} className="ml-[1px]"><path d="M1 11.500 L11 1 V11.500Z" stroke="#fff" strokeWidth="1" /><path d="M0 12 L7 5 V12Z" fill="#fff" /></Svg>
                <Svg w={8} h={13} className="ml-[6px] mr-[6px]"><path d="M0.500 2 H2 V0.500 H5.500 V2 H7 V12.500 H0.500Z" fill="#fff" /></Svg>
              </div>
              <div className="mt-[67px] h-[46px]"><ShopperLogo /></div>
              <div className="mt-[90px] flex h-[34px] w-[316px] items-start border-b border-[#b5b5b5] pl-[9px] text-[14px] leading-[24px] text-[#a5a5a5]">Email</div>
              <div className="flex h-[56px] w-[316px] items-start justify-between border-b border-[#b5b5b5] pl-[9px] pt-[18px] text-[14px] leading-[25px] text-[#a5a5a5]">
                Password
                <MdRemoveRedEye size={20} className="mr-[12px] mt-[6px] text-black" />
              </div>
              <div className="mt-[17px] flex h-[42px] w-[316px] items-center justify-center border-2 border-[#a9a9a9] text-[13px] font-medium tracking-[-0.100px] text-black">Login</div>
              <div className="mt-[5px] text-[13px] leading-[22px] tracking-[-0.190px] text-[#2f98f0]">New user? Create an account here!</div>
            </div>
            <div className="flex h-[42px] w-full items-center justify-center pr-[3px]">
              <Svg w={14} h={15}><path d="M0.500 7.500 L13 0.500 V14.500Z" fill="#9a9a9a" /></Svg>
              <span className="ml-[93px] h-[14px] w-[14px] rounded-full bg-[#9a9a9a]" />
              <span className="ml-[92px] h-[14px] w-[14px] bg-[#9a9a9a]" />
            </div>
            <div className="mt-[45px] -ml-[4px] h-[9px] w-[153px] rounded-full border border-[#4a4a48] bg-[repeating-linear-gradient(to_right,#2a2520_0_1px,#0e0e0e_1px_3px)]" />
          </div>
        </div>
      </div>
    </div>
  );
}

function EmulatorToolbar() {
  const items = [
    <MdPowerSettingsNew size={24} />, <MdVolumeUp size={24} />, <MdVolumeDown size={24} />, <RotateIcon />, <RotateIcon flip />,
    <MdPhotoCamera size={23} />, <MdZoomIn size={24} />,
    <Svg w={16} h={17} stroke="currentColor" strokeWidth="1.500"><path d="M1.500 8.500 L14 1.500 V15.500Z" /></Svg>,
    <Svg w={16} h={16} stroke="currentColor" strokeWidth="1.500"><circle cx="8" cy="8" r="6.500" /></Svg>,
    <Svg w={16} h={16} stroke="currentColor" strokeWidth="1.500"><rect x="1" y="1" width="13.500" height="13.500" rx="1" /></Svg>,
    <Svg w={18} h={6} fill="currentColor"><circle cx="3" cy="3" r="2" fill="currentColor" /><circle cx="9" cy="3" r="2" fill="currentColor" /><circle cx="15" cy="3" r="2" fill="currentColor" /></Svg>,
  ];
  return (
    <aside className="absolute left-[1797px] top-[139px] flex h-[559px] w-[71px] flex-col border border-black bg-[#f0f0f0] text-[#607d8b]">
      <div className="flex h-[35px] items-center pt-[5px]">
        <Svg w={8} h={2} className="ml-[15px]" stroke="currentColor" strokeWidth="1.500"><path d="M0 1 H8" /></Svg>
        <Svg w={8} h={8} className="ml-[22px]" stroke="currentColor" strokeWidth="1.400"><path d="M0.500 0.500 L7.500 7.500 M7.500 0.500 L0.500 7.500" /></Svg>
      </div>
      {items.map((it, i) => (
        <div key={i} className="flex h-[47px] shrink-0 items-center justify-center pr-[1px]">{it}</div>
      ))}
    </aside>
  );
}

export default function App() {
  return (
    <div className="relative h-[1080px] w-[1920px] overflow-hidden bg-[#f3f2f1] font-['Open_Sans','Noto_Sans',sans-serif]">
      <TitleBar />
      <Tabs />
      <Ribbon />
      <Document />
      <StatusBar />
      <Taskbar />
      <Phone />
      <EmulatorToolbar />
    </div>
  );
}
